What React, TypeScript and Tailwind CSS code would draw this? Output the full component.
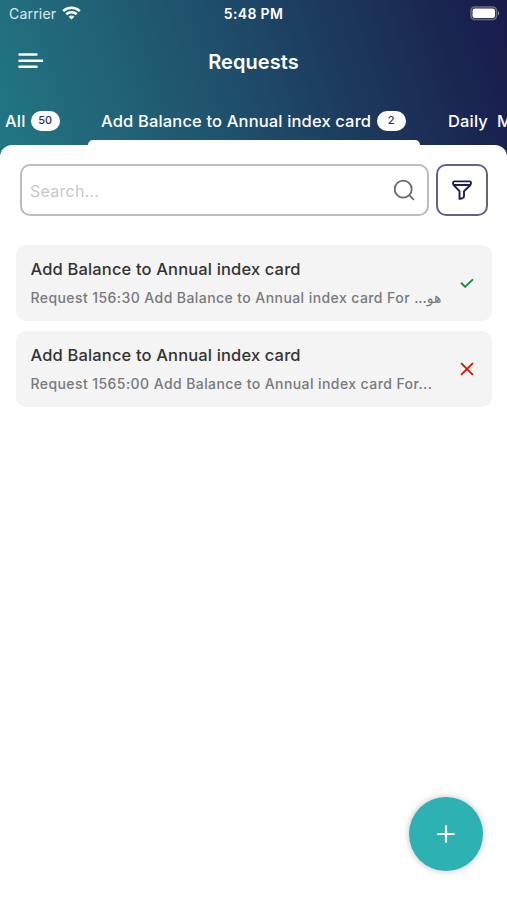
const tabs = [
  { label: 'All', count: 50 },
  { label: 'Add Balance to Annual index card', count: 2, active: true },
];

const requests = [
  {
    title: 'Add Balance to Annual index card',
    summary: 'Request 156:30 Add Balance to Annual index card For ',
    name: 'هو...',
    approved: true,
  },
  {
    title: 'Add Balance to Annual index card',
    summary: 'Request 1565:00 Add Balance to Annual index card For...',
    name: '',
    approved: false,
  },
];

function StatusBar() {
  return (
    <div className="grid h-7 grid-cols-3 items-center pl-[9px] pr-[7px] text-[14px] leading-7">
      <div className="flex items-center gap-[6px]">
        <span className="tracking-[0.2px] text-white/85">Carrier</span>
        <svg className="-mt-[2px]" width="19" height="14" viewBox="0 0 19 14" fill="none" stroke="white" strokeWidth="2.6">
          <path d="M1.2 5.1C5.8.6 13.2.6 17.8 5.1" />
          <path d="M4.3 8.3c2.9-2.8 7.5-2.8 10.4 0" />
          <path d="M9.5 13.6 6.6 10.7c1.6-1.5 4.2-1.5 5.8 0Z" fill="white" stroke="none" />
        </svg>
      </div>
      <span className="-ml-[2px] text-center text-[14px] font-semibold tracking-[0.35px]">5:48 PM</span>
      <svg className="-mt-[1px] justify-self-end" width="30" height="15" viewBox="0 0 30 15">
        <rect x="1" y="1" width="25.5" height="12.5" rx="3.8" fill="none" stroke="white" strokeWidth="1.6" strokeOpacity="0.35" />
        <rect x="2.5" y="2.5" width="22.5" height="9.5" rx="2.2" fill="white" />
        <path d="M28 5c1.7.8 1.7 3.7 0 4.5Z" fill="white" fillOpacity="0.5" />
      </svg>
    </div>
  );
}

function Header() {
  return (
    <header className="h-[160px] overflow-hidden bg-[linear-gradient(72deg,#217884_0%,#215f74_28%,#1e4a68_50%,#1b3259_74%,#191f4e_94%,#191b49_100%)] text-white">
      <StatusBar />
      <div className="grid h-[66px] grid-cols-[1fr_auto_1fr] items-center px-[18px]">
        <svg width="26" height="18" viewBox="0 0 26 18" stroke="white" strokeWidth="2.5" strokeLinecap="round">
          <path d="M1.5 2.5h17M1.5 8.7h22.5M1.5 14.7h17" />
        </svg>
        <h1 className="pt-px text-[20px] font-semibold tracking-[0.05px]">Requests</h1>
      </div>
      <nav className="flex h-[66px] whitespace-nowrap pl-[5px] text-[16.5px] font-medium tracking-[0.15px]">
        {tabs.map((tab) => (
          <div key={tab.label} className={tab.active ? 'ml-7 w-[332px] shrink-0' : 'w-[55px] shrink-0'}>
            <div className={`flex h-[46px] items-center justify-between pt-[7px] ${tab.active ? 'pl-[13px] pr-[14px]' : ''}`}>
              <span className="pt-px">{tab.label}</span>
              <span className="flex h-5 w-[29.5px] items-center justify-center rounded-full bg-white text-[11px] font-medium text-[#35304f]">
                {tab.count}
              </span>
            </div>
            {tab.active && <div className="h-5 rounded-t-[5px] bg-white" />}
          </div>
        ))}
        <span className="ml-7 flex h-[46px] shrink-0 items-center pt-[8px]">Daily&nbsp; M</span>
      </nav>
    </header>
  );
}

function SearchRow() {
  return (
    <div className="flex gap-[7px] pl-5 pr-[19px]">
      <div className="flex h-[52px] flex-1 items-center justify-between rounded-[10px] border-2 border-[#bcbcbc] pl-[8px] pr-[12px]">
        <span className="pt-px text-[16px] tracking-[0.25px] text-[#c8c8c8]">Search...</span>
        <svg width="22" height="22" viewBox="0 0 22 22" fill="none" stroke="#666b70" strokeWidth="1.8" strokeLinecap="round">
          <circle cx="10.2" cy="10.2" r="8.5" />
          <path d="m16.4 16.4 4 3.9" />
        </svg>
      </div>
      <button className="flex h-[52px] w-[52px] items-center justify-center rounded-[10px] border-2 border-[#65628a]">
        <svg width="20" height="20" viewBox="0 0 20 20" fill="none" stroke="#1f1d55" strokeWidth="1.9" strokeLinejoin="round">
          <rect x="1" y="1.4" width="18" height="3.6" rx="1.4" />
          <path d="M1.5 5l6 6.2v7.7l3-.7q1.5-.4 1.5-1.9v-5.1L18.500 5" />
        </svg>
      </button>
    </div>
  );
}

function StatusIcon({ approved }: { approved: boolean }) {
  return (
    <svg width="14" height="14" viewBox="0 0 14 14" fill="none" strokeWidth="2" strokeLinecap="round" strokeLinejoin="round">
      {approved ? (
        <path d="m1.6 7.3 3.5 3.6 7.3-7" stroke="#159337" />
      ) : (
        <path d="m1.6 1.6 10.8 10.8M12.4 1.6 1.6 12.4" stroke="#d61f0b" />
      )}
    </svg>
  );
}

export default function App() {
  return (
    <div className="relative h-[900px] w-[507px] overflow-hidden bg-white font-['Inter','Noto_Sans','DejaVu_Sans',sans-serif]">
      <Header />
      <main className="relative -mt-[15px] rounded-t-[12px] bg-white pt-[19px]">
        <SearchRow />
        <ul className="mt-[29px] flex flex-col gap-[10px] pl-4 pr-[15px]">
          {requests.map((request) => (
            <li
              key={request.summary}
              className="flex h-[76px] items-center justify-between rounded-[10px] bg-[#f4f4f4] pl-[14.5px] pr-[18.5px]"
            >
              <div className="whitespace-nowrap pt-[2px]">
                <p className="text-[16.5px] font-medium leading-7 tracking-[0.15px] text-[#333]">{request.title}</p>
                <p className="text-[14px] font-medium leading-[30px] tracking-[0.42px] text-[#77797c]">
                  {request.summary}
                  {request.name && <bdi dir="rtl" className="tracking-[-0.3px]">{request.name}</bdi>}
                </p>
              </div>
              <StatusIcon approved={request.approved} />
            </li>
          ))}
        </ul>
      </main>
      <button className="absolute bottom-[29px] right-6 flex h-[74px] w-[74px] items-center justify-center rounded-full bg-[#2eb1b2] shadow-[0_0_7px_rgba(0,0,0,0.25)]">
        <svg width="18" height="18" viewBox="0 0 18 18" stroke="white" strokeWidth="2.2" strokeLinecap="round">
          <path d="M9 1.2v15.6M1.2 9h15.6" />
        </svg>
      </button>
    </div>
  );
}
